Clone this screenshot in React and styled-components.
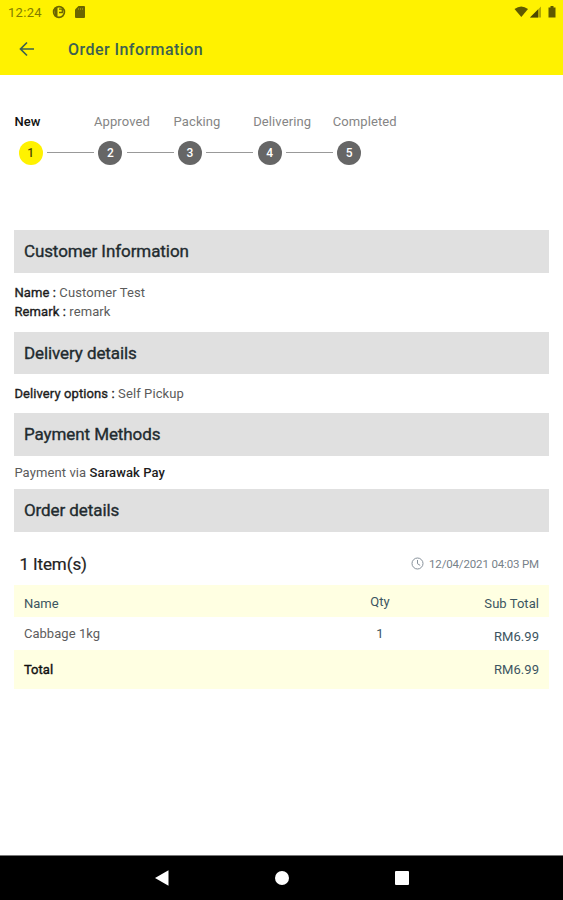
import React from "react";
import styled, { createGlobalStyle } from "styled-components";

const steps = ["New", "Approved", "Packing", "Delivering", "Completed"];

const App = () => {
  return (
    <Screen>
      <GlobalStyle />
      <Header>
        <StatusBar>
          <Clock>12:24</Clock>
          <svg width="14" height="14" viewBox="0 0 14 14">
            <circle cx="7" cy="7" r="5.4" fill="none" stroke="#6b6500" strokeWidth="1.7" />
            <path d="M2 3L5.500 2v9.500L3 11z" fill="#6b6500" />
            <path d="M7 4.200h3.300v3.300H7" fill="none" stroke="#6b6500" strokeWidth="1.3" />
          </svg>
          <CardIcon width="10" height="12" viewBox="0 0 10 12">
            <path d="M3.5 0H9a1 1 0 0 1 1 1v10a1 1 0 0 1-1 1H1a1 1 0 0 1-1-1V3.5z" fill="#6b6500" />
            <path d="M3.5 2v2M5.5 2v2M7.5 2v2" stroke="#a29a00" strokeWidth=".8" />
          </CardIcon>
          <Signals width="49" height="14" viewBox="0 0 49 14">
            <path d="M.5 4Q7.300 -1.200 14 4L7.300 12z" fill="#5f5a00" />
            <path d="M16 12.500L27 1.500v11z" fill="#b0a800" />
            <path d="M16 12.500L24 4.500v8z" fill="#4d4900" />
            <path d="M34.500 2.500h2V1h3v1.500h2V12.500h-7z" fill="#5f5a00" />
          </Signals>
        </StatusBar>
        <TitleBar>
          <svg width="16" height="16" viewBox="0 0 16 16">
            <path d="M15 8H2M8 1.500L1.500 8L8 14.500" fill="none" stroke="#3d6150" strokeWidth="1.7" />
          </svg>
          <Title>Order Information</Title>
        </TitleBar>
      </Header>
      <Content>
        <Stepper>
          {steps.map((label, i) => (
            <Step key={label}>
              <StepLabel $active={i === 0}>{label}</StepLabel>
              <StepTrack>
                <StepDot $active={i === 0}>{i + 1}</StepDot>
                {i < steps.length - 1 && <StepLine />}
              </StepTrack>
            </Step>
          ))}
        </Stepper>

        <SectionTitle>Customer Information</SectionTitle>
        <Details $height={58.5}>
          <p>
            <Strong>Name :</Strong> Customer Test
          </p>
          <p>
            <Strong>Remark :</Strong> remark
          </p>
        </Details>
        <SectionTitle>Delivery details</SectionTitle>
        <Details $height={38.6}>
          <p>
            <Strong>Delivery options :</Strong> Self Pickup
          </p>
        </Details>
        <SectionTitle>Payment Methods</SectionTitle>
        <Details $height={33.5}>
          <p>
            Payment via <Strong $bold>Sarawak Pay</Strong>
          </p>
        </Details>
        <SectionTitle>Order details</SectionTitle>

        <Summary>
          <ItemCount>1 Item(s)</ItemCount>
          <OrderDate>
            <svg width="13" height="13" viewBox="0 0 13 13">
              <circle cx="6.500" cy="6.500" r="5.500" fill="none" stroke="#87919a" />
              <path d="M6.500 3v3.700l2.700 1.700" fill="none" stroke="#87919a" />
            </svg>
            12/04/2021 04:03 PM
          </OrderDate>
        </Summary>
        <Row $height={32.3} $tinted>
          <Cell $offset={2}>Name</Cell>
          <Qty>Qty</Qty>
          <Amount $offset={2}>Sub Total</Amount>
        </Row>
        <Row $height={33}>
          <Cell $color="#5d5d5d">Cabbage 1kg</Cell>
          <Qty>1</Qty>
          <Amount $offset={2.5}>RM6.99</Amount>
        </Row>
        <Row $height={38.7} $tinted>
          <Cell $color="#111" $stroke={0.4}>
            Total
          </Cell>
          <Amount>RM6.99</Amount>
        </Row>
      </Content>
      <NavBar>
        <svg width="14" height="16" viewBox="0 0 14 16">
          <path d="M0 8L13.500 .2v15.600z" fill="#fff" />
        </svg>
        <HomeDot />
        <RecentSquare />
      </NavBar>
    </Screen>
  );
};

const GlobalStyle = createGlobalStyle`
  * {
    box-sizing: border-box;
    margin: 0;
  }
  body {
    background: #fff;
    font-family: Roboto, "Liberation Sans", sans-serif;
  }
`;

const Screen = styled.div`
  width: 563px;
  height: 900px;
  display: flex;
  flex-direction: column;
  overflow: hidden;
`;

const Header = styled.header`
  height: 75px;
  background: #fff200;
`;

const StatusBar = styled.div`
  height: 24px;
  display: flex;
  align-items: center;
  padding: 0 0 0 8px;
`;

const Clock = styled.span`
  width: 44px;
  font-size: 13px;
  letter-spacing: 0.3px;
  color: #837c00;
`;

const CardIcon = styled.svg`
  margin-left: 9px;
`;

const Signals = styled.svg`
  margin-left: auto;
`;

const TitleBar = styled.div`
  height: 50px;
  display: flex;
  align-items: center;
  gap: 33px;
  padding-left: 19px;
`;

const Title = styled.h1`
  font-size: 16px;
  font-weight: 500;
  letter-spacing: 0.45px;
  color: #3d6150;
`;

const Content = styled.main`
  flex: 1;
  padding: 37px 14px 0 14.4px;
`;

const Stepper = styled.div`
  height: 118.4px;
  display: flex;
`;

const Step = styled.div`
  width: 79.6px;
`;

const StepLabel = styled.div`
  height: 28.5px;
  padding-top: 0.6px;
  line-height: 18px;
  font-size: 13px;
  letter-spacing: 0.1px;
  white-space: nowrap;
  font-weight: ${({ $active }) => ($active ? 500 : 400)};
  color: ${({ $active }) => ($active ? "#111" : "#858585")};
`;

const StepTrack = styled.div`
  display: flex;
  align-items: center;
  padding-left: 4.4px;
`;

const StepDot = styled.div`
  width: 24px;
  height: 24px;
  flex: none;
  border-radius: 50%;
  font-size: 12px;
  line-height: 24px;
  text-align: center;
  font-weight: 500;
  background: ${({ $active }) => ($active ? "#fff200" : "#666")};
  color: ${({ $active }) => ($active ? "#4f4b00" : "#fff")};
`;

const StepLine = styled.div`
  width: 47px;
  height: 1px;
  flex: none;
  margin-left: 4.5px;
  background: #999;
`;

const SectionTitle = styled.h2`
  height: 42.8px;
  padding-left: 9.5px;
  line-height: 43px;
  font-size: 17px;
  font-weight: 400;
  letter-spacing: -0.08px;
  -webkit-text-stroke: 0.35px #222b2f;
  color: #222b2f;
  background: #e0e0e0;
`;

const Details = styled.div`
  height: ${({ $height }) => $height}px;
  display: flex;
  flex-direction: column;
  justify-content: center;
  font-size: 13px;
  line-height: 19.5px;
  letter-spacing: 0.1px;
  color: #5b5b5b;
`;

const Strong = styled.span`
  font-weight: ${({ $bold }) => ($bold ? 500 : 400)};
  -webkit-text-stroke: ${({ $bold }) => ($bold ? 0 : 0.35)}px #1c1c1c;
  color: #1c1c1c;
`;

const Summary = styled.div`
  height: 53px;
  display: flex;
  align-items: center;
  justify-content: space-between;
  padding: 10px 10px 0 5px;
`;

const ItemCount = styled.span`
  font-size: 17px;
  letter-spacing: -0.1px;
  -webkit-text-stroke: 0.2px #222;
  color: #222;
`;

const OrderDate = styled.span`
  display: flex;
  align-items: center;
  gap: 5px;
  font-size: 11.5px;
  letter-spacing: -0.15px;
  color: #77828a;
`;

const Row = styled.div`
  height: ${({ $height }) => $height}px;
  display: grid;
  grid-template-columns: 1fr 60px 129px;
  align-items: center;
  padding: 0 10px 0 9.5px;
  font-size: 13px;
  background: ${({ $tinted }) => ($tinted ? "#ffffe2" : "#fff")};
`;

const Cell = styled.span`
  padding-top: ${({ $offset = 0 }) => $offset * 2}px;
  letter-spacing: 0.05px;
  color: ${({ $color = "#3c5561" }) => $color};
  -webkit-text-stroke: ${({ $stroke = 0 }) => $stroke}px currentColor;
`;

const Qty = styled(Cell)`
  text-align: center;
`;

const Amount = styled(Cell)`
  grid-column: 3;
  text-align: right;
`;

const NavBar = styled.nav`
  height: 45px;
  display: flex;
  align-items: center;
  justify-content: center;
  gap: 106px;
  border-top: 1px solid #777;
  background: #000;
`;

const HomeDot = styled.span`
  width: 14px;
  height: 14px;
  border-radius: 50%;
  background: #fff;
`;

const RecentSquare = styled.span`
  width: 14px;
  height: 14px;
  border-radius: 1px;
  background: #fff;
`;

export default App;
